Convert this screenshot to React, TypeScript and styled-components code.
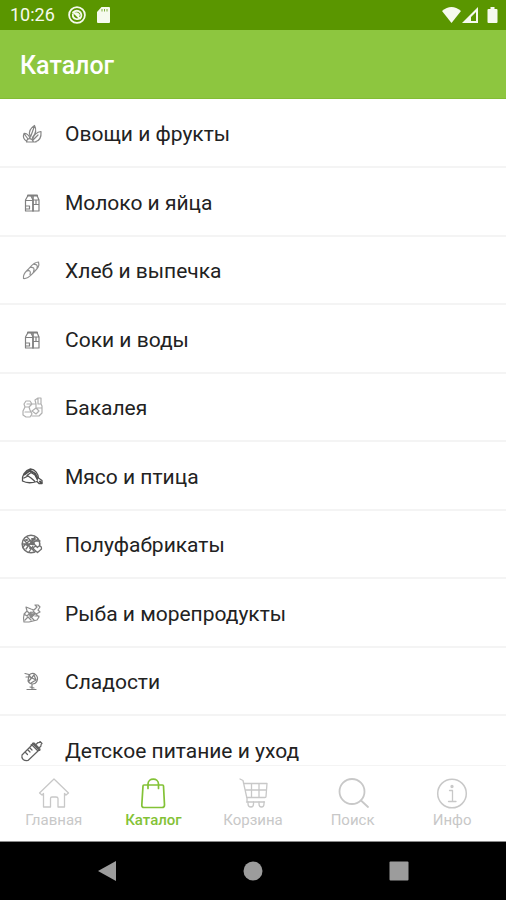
import React from "react";
import styled, { createGlobalStyle } from "styled-components";

const GlobalStyle = createGlobalStyle`
  *, *::before, *::after { box-sizing: border-box; }
  body { margin: 0; background: #fff; font-family: Roboto, "Liberation Sans", sans-serif; }
`;

const Screen = styled.div`
  display: flex;
  flex-direction: column;
  height: 100vh;
  background: #fff;
  overflow: hidden;
`;

const StatusBar = styled.div`
  display: flex;
  flex: none;
  align-items: center;
  justify-content: space-between;
  height: 30px;
  padding: 0 8px 0 10px;
  background: #5a9600;
  color: #f6faee;
`;

const StatusGroup = styled.div<{ $gap: number }>`
  display: flex;
  align-items: center;
  gap: ${(p) => p.$gap}px;
`;

const Clock = styled.time`
  font-size: 18px;
  line-height: 30px;
`;

const Header = styled.header`
  display: flex;
  flex: none;
  align-items: center;
  height: 69px;
  padding: 4px 20px 0;
  border-bottom: 1px solid #82bd34;
  background: #8dc63f;
`;

const Title = styled.h1`
  margin: 0;
  color: #fff;
  font-size: 25px;
  font-weight: 500;
  line-height: 32px;
`;

const List = styled.ul`
  display: grid;
  flex: 1;
  grid-auto-rows: 68px 69px;
  min-height: 0;
  margin: 0;
  padding: 1px 0 0;
  overflow: hidden;
  list-style: none;
`;

const Item = styled.li`
  display: flex;
  border-bottom: 2px solid #f4f4f4;
`;

const ItemLink = styled.a`
  display: flex;
  flex: 1;
  align-items: center;
  gap: 21px;
  padding: 2px 20px 0;
  color: #222;
  font-size: 21px;
  line-height: 28px;
  text-decoration: none;
`;

const Tabs = styled.nav`
  display: flex;
  flex: none;
  justify-content: space-between;
  height: 77px;
  padding: 0 4px;
  border-top: 1px solid #f4f4f4;
  border-bottom: 1px solid #8a8a8a;
  background: #fff;
`;

const Tab = styled.a<{ $active?: boolean }>`
  display: flex;
  flex: 1;
  flex-direction: column;
  align-items: center;
  gap: 1px;
  padding-top: 11px;
  color: ${(p) => (p.$active ? "#83c236" : "#c8c8c8")};
  font-size: 15px;
  font-weight: ${(p) => (p.$active ? 500 : 400)};
  line-height: 20px;
  text-decoration: none;
`;

const SystemBar = styled.div`
  display: flex;
  flex: none;
  align-items: center;
  justify-content: space-around;
  height: 58px;
  padding: 0 34px;
  background: #000;
`;

const SystemButton = styled.button`
  display: flex;
  align-items: center;
  justify-content: center;
  width: 24px;
  height: 40px;
  padding: 0;
  border: 0;
  background: none;
  color: #9c9c9c;
`;

const Glyph = styled.svg<{ $w: number; $h: number }>`
  display: block;
  flex: none;
  width: ${(p) => p.$w}px;
  height: ${(p) => p.$h}px;
  fill: none;
  stroke: currentColor;
  stroke-linecap: round;
  stroke-linejoin: round;
`;

type ItemIconProps = { color: string; width?: number; children: React.ReactNode };

const ItemIcon = ({ color, width = 1.2, children }: ItemIconProps) => (
  <Glyph $w={24} $h={24} viewBox="0 0 24 24" color={color} strokeWidth={width} aria-hidden="true">
    {children}
  </Glyph>
);

const Carton = () => (
  <ItemIcon color="#808080">
    <path d="M5.500 20V9L8 4.500H17L19 9V20ZM5.500 9.500H13M13 20V9L11 5M13 9H19M13 13.500H19M5.500 15H9.500V18H5.500M16 9V13" />
    <path d="M8 4.500H17" strokeWidth="2" />
    <path d="M13 5.500V20" strokeWidth="1.600" />
  </ItemIcon>
);

const categories = [
  {
    name: "Овощи и фрукты",
    icon: (
      <ItemIcon color="#858585">
        <path d="M7 19.500C3.500 17.500 3 14 4 11.500C7 11 9.500 14 10 16.500M4 11.500L8 17M10 13.500C8.500 10 10 6.500 14.500 3.500C17 8 15.500 12 12.500 15.500M10.500 15L14.500 4M12.500 17C14 12.500 17 10 21 9.500C21.500 15 19 19 15 20M13 18L18 13M6.500 20C7 15.500 12 15.500 13.500 20ZM13.500 20H16" />
      </ItemIcon>
    ),
  },
  { name: "Молоко и яйца", icon: <Carton /> },
  {
    name: "Хлеб и выпечка",
    icon: (
      <ItemIcon color="#909090">
        <path d="M3.500 19.500C2.500 15 6 12.500 8.500 10C11.500 6.500 14 3 18.500 3C20 7.500 17 10 13.500 13.500C10.500 16.500 8 20 3.500 19.500ZM7 12C10 11 11 12.500 10 15.500M10.500 8.500C13.500 8 15 9.500 13.500 12.500M14 5.500C16.500 5 18 6.500 17 9" />
      </ItemIcon>
    ),
  },
  { name: "Соки и воды", icon: <Carton /> },
  {
    name: "Бакалея",
    icon: (
      <ItemIcon color="#b0b0b0">
        <path d="M5 11L3 15V19L6 21H10L12 18L10 14L9 11ZM5 11L4 8L6 5H10L12 8L9 11M12 8H16L15 4L18 2H21V8L22 10V17L19 20H12M16 8V12L12 15M16 12H22M12 15L16 18L19 15L16 12M5 16H10M7 8H11M18 2V8H21" />
      </ItemIcon>
    ),
  },
  {
    name: "Мясо и птица",
    icon: (
      <ItemIcon color="#505050" width={1.3}>
        <path d="M2.500 16C1.500 11 5 5.500 10.500 4C15.500 4.500 18 9 18.500 13L22 15.500V18.500H19L17 16.500C12 18 6 18 2.500 16ZM4 13L8 11L11 13L14.500 16M7 10.500L11 7.500L15 10L17.500 15" />
        <path d="M4.500 9.500L10 5.500L15 8.500L17.500 13M20 16.500L21.500 18" strokeWidth="1.900" />
      </ItemIcon>
    ),
  },
  {
    name: "Полуфабрикаты",
    icon: (
      <ItemIcon color="#707070" width={1.3}>
        <circle cx="11" cy="11" r="8.800" strokeWidth="1.600" />
        <path d="M4 7L14 18M7 4L17 14M3 11H12L18 6M6 16L15 4M3 14L9 8H20M9 19L13 13" />
        <path d="M6 7H7M12 6H15M7 12H8M11 11H14M10 15H12" strokeWidth="2" />
        <path d="M17.500 19.500L13.500 16C13 13.500 16 12.500 17.500 14.500C19 12 22 13 21.500 16Z" fill="#fff" />
      </ItemIcon>
    ),
  },
  {
    name: "Рыба и морепродукты",
    icon: (
      <ItemIcon color="#8c8c8c">
        <path d="M4 20C3 16 3 12 7 9L6 5L11 7L14 8L17 5L15 3L18 3L20 5L18 8L20 10L16 12L19 15L17 18L9 20ZM4 12L7 14L11 10L15 12L11 15L14 18M5 18L8 15L11 18M7 9L10 12M13 9L16 12M15 14H19" />
        <path d="M10 12L13 13L11 15Z" strokeWidth="2.400" />
      </ItemIcon>
    ),
  },
  {
    name: "Сладости",
    icon: (
      <ItemIcon color="#808080">
        <path d="M5 3.500L9 4.500L11 8M6 7H9M9 5C14 1 19 6 17 11C15 15 10 15 8 11L9 5ZM9 11L14 5L16 10L11 13M10 7L16 10M12 14V19M7 19.500H16M10 17L14 18" />
      </ItemIcon>
    ),
  },
  {
    name: "Детское питание и уход",
    icon: (
      <ItemIcon color="#606060">
        <path d="M2 16L12 6L18 12L8 21.500C4 22 1 20 2 16ZM11 6L14 4L20 10L18 12M16 5.500L18 3.500Q19.500 4 20 2.500L22 4.500Q20.500 5.500 21 7L19 9M5.500 13.500L7.500 15.500M8 11L10 13M10 9L12 11" />
        <path d="M13 4.500L19.500 11" strokeWidth="2" />
      </ItemIcon>
    ),
  },
];

const tabs = [
  {
    name: "Главная",
    icon: <path d="M1.500 16L16 2L30.500 16L28 18L26.500 16.500V30H20V21.500Q20 20 18 20H14Q12.500 20 12.500 21.500V30H5.500V16.500L4 18Z" />,
  },
  {
    name: "Каталог",
    active: true,
    icon: (
      <g strokeWidth="1.700">
        <path d="M7 8H25.500Q26.500 8 26.500 9L27.500 28Q27.500 30.500 25 30.500H7Q4.700 30.500 4.800 28L6 9Q6 8 7 8Z" />
        <path d="M11 11.500V7C11 0.500 21.500 0.500 21.500 7V11.500" />
      </g>
    ),
  },
  {
    name: "Корзина",
    icon: (
      <>
        <path d="M3 2L6 3.500L10 21.500V24M6.500 6.500H30L29 19.500Q29 20.500 28 20.500H9.500M8 13H29.500M14.500 6.500V20.500M22 6.500V20.500M9.500 25H27.500" />
        <path d="M11 25V27Q11 30 14 30Q16.500 30 16.500 27V25M22 25V27Q22 30 24.500 30Q27 30 27 27V25" />
      </>
    ),
  },
  {
    name: "Поиск",
    icon: (
      <g strokeWidth="1.800">
        <circle cx="15" cy="14.500" r="12.500" />
        <path d="M24 23.500L31 30" />
      </g>
    ),
  },
  {
    name: "Инфо",
    icon: (
      <>
        <circle cx="16" cy="16.500" r="14.300" strokeWidth="1.500" />
        <path d="M13.500 13.500H16.500V24M12.500 24.500H20" />
        <circle cx="16" cy="9.500" r="1" fill="currentColor" />
      </>
    ),
  },
];

export default function App() {
  return (
    <Screen>
      <GlobalStyle />
      <StatusBar>
        <StatusGroup $gap={13}>
          <Clock>10:26</Clock>
          <StatusGroup $gap={11}>
            <Glyph $w={18} $h={18} viewBox="0 0 18 18" strokeWidth={1.8} aria-hidden="true">
              <circle cx="9" cy="9" r="7.900" />
              <path d="M5 6.500Q9 3 12.500 6.500Q14.500 10 12 12.500M4.800 8.500Q4.500 12 8 13Q10 13.500 12 12.500L7 7.500M6.500 7.500Q9.500 6.500 11 9" />
            </Glyph>
            <Glyph $w={13} $h={16} viewBox="0 0 13 16" aria-hidden="true">
              <path d="M4.500 0H12Q13 0 13 1V15Q13 16 12 16H1Q0 16 0 15V5Z" fill="currentColor" stroke="none" />
              <path d="M5 2V4.500M7.500 2V4.500M10 2V4.500" stroke="#7fae3a" strokeLinecap="butt" />
            </Glyph>
          </StatusGroup>
        </StatusGroup>
        <StatusGroup $gap={1}>
          <Glyph $w={19} $h={16} viewBox="0 0 19 16" aria-hidden="true">
            <path d="M0 4Q9.500 -4 19 4L9.500 16Z" fill="currentColor" stroke="none" />
          </Glyph>
          <Glyph $w={17} $h={16} viewBox="0 0 17 16" aria-hidden="true">
            <path d="M16 0V16H0ZM14 5L9 10V14H14Z" fill="currentColor" fillRule="evenodd" stroke="none" />
          </Glyph>
          <Glyph $w={18} $h={16} viewBox="0 0 18 16" aria-hidden="true">
            <path d="M10.500 0H14.500V2H16.500Q17.500 2 17.500 3V15Q17.500 16 16.500 16H8.500Q7.500 16 7.500 15V3Q7.500 2 8.500 2H10.500Z" fill="currentColor" stroke="none" />
          </Glyph>
        </StatusGroup>
      </StatusBar>
      <Header>
        <Title>Каталог</Title>
      </Header>
      <List>
        {categories.map((c) => (
          <Item key={c.name}>
            <ItemLink href="#">
              {c.icon}
              {c.name}
            </ItemLink>
          </Item>
        ))}
      </List>
      <Tabs>
        {tabs.map((t) => (
          <Tab key={t.name} href="#" $active={t.active} aria-current={t.active ? "page" : undefined}>
            <Glyph $w={32} $h={32} viewBox="0 0 32 32" strokeWidth={1.3} aria-hidden="true">
              {t.icon}
            </Glyph>
            {t.name}
          </Tab>
        ))}
      </Tabs>
      <SystemBar>
        <SystemButton aria-label="Назад">
          <Glyph $w={20} $h={22} viewBox="0 0 20 22">
            <path d="M19 1V21L1 11Z" fill="currentColor" stroke="none" />
          </Glyph>
        </SystemButton>
        <SystemButton aria-label="Домой">
          <Glyph $w={20} $h={20} viewBox="0 0 20 20">
            <circle cx="10" cy="10" r="9.500" fill="currentColor" stroke="none" />
          </Glyph>
        </SystemButton>
        <SystemButton aria-label="Недавние">
          <Glyph $w={20} $h={20} viewBox="0 0 20 20">
            <rect x="0.500" y="0.500" width="19" height="19" rx="1" fill="currentColor" stroke="none" />
          </Glyph>
        </SystemButton>
      </SystemBar>
    </Screen>
  );
}
